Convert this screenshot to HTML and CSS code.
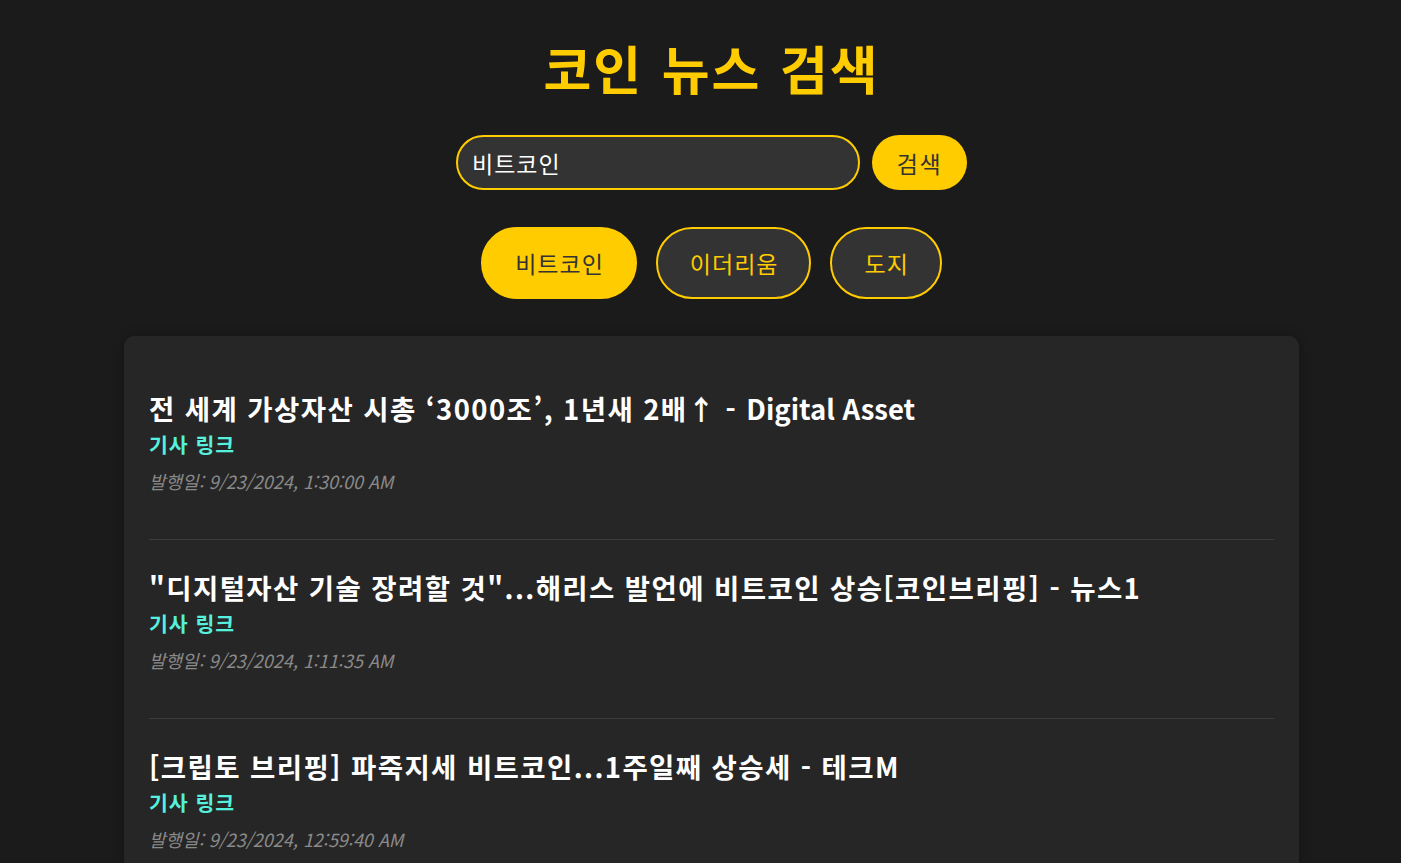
FILE: index.html
```html
<!DOCTYPE html>
<html lang="ko">
<head>
<meta charset="utf-8">
<title>코인 뉴스 검색</title>
<link rel="stylesheet" href="styles.css">
</head>
<body>
<div class="page">
  <h1 class="title">코인 뉴스 검색</h1>
  <form class="search">
    <input class="search-input" type="text" value="비트코인">
    <button class="search-btn" type="button">검색</button>
  </form>
  <div class="filters">
    <button class="chip chip-active" type="button">비트코인</button>
    <button class="chip" type="button">이더리움</button>
    <button class="chip" type="button">도지</button>
  </div>
  <div class="card">
    <div class="item">
      <h2 class="item-title">전 세계 가상자산 시총 ‘3000조’, 1년새 2배↑ - <span class="latin">Digital Asset</span></h2>
      <a class="item-link" href="#">기사 링크</a>
      <p class="item-date">발행일: 9/23/2024, 1:30:00 AM</p>
    </div>
    <div class="item">
      <h2 class="item-title">"디지털자산 기술 장려할 것"...해리스 발언에 비트코인 상승[코인브리핑] - 뉴스1</h2>
      <a class="item-link" href="#">기사 링크</a>
      <p class="item-date">발행일: 9/23/2024, 1:11:35 AM</p>
    </div>
    <div class="item">
      <h2 class="item-title">[크립토 브리핑] 파죽지세 비트코인...1주일째 상승세 - 테크M</h2>
      <a class="item-link" href="#">기사 링크</a>
      <p class="item-date">발행일: 9/23/2024, 12:59:40 AM</p>
    </div>
  </div>
</div>
</body>
</html>
```
FILE: styles.css
```css
html, body {
  margin: 0;
  background: #1b1b1b;
}
body {
  padding: 0 0 0 22px;
  font-family: "Noto Sans CJK KR", "Noto Sans", sans-serif;
  color: #fff;
  overflow: hidden;
  height: 863px;
  box-sizing: border-box;
}
.page {
  width: 1175px;
  margin: 0 auto;
  display: flex;
  flex-direction: column;
  align-items: center;
}
.title {
  margin: 35px 0 0;
  font-size: 52px;
  line-height: 66px;
  font-weight: 700;
  color: #ffcc00;
  letter-spacing: 2px;
  word-spacing: 2px;
}
.search {
  display: flex;
  gap: 12px;
  margin-top: 34px;
}
.search-input {
  width: 404px;
  height: 55px;
  box-sizing: border-box;
  border: 2px solid #ffcc00;
  border-radius: 28px;
  background: #333;
  color: #fff;
  font-family: inherit;
  font-size: 23px;
  letter-spacing: 1px;
  padding: 0 14px;
  outline: none;
}
.search-btn {
  width: 95px;
  height: 55px;
  border: none;
  border-radius: 28px;
  background: #ffcc00;
  color: #333;
  font-family: inherit;
  font-size: 23px;
  letter-spacing: 1.5px;
  padding: 0;
}
.filters {
  display: flex;
  gap: 19px;
  margin-top: 37px;
}
.chip {
  height: 72px;
  box-sizing: border-box;
  padding: 0 31px 0 32px;
  border: 2px solid #ffcc00;
  border-radius: 36px;
  background: #333;
  color: #ffcc00;
  font-family: inherit;
  font-size: 23px;
  letter-spacing: 1px;
}
.chip-active {
  background: #ffcc00;
  color: #333;
}
.card {
  align-self: stretch;
  margin-top: 37px;
  background: #262626;
  border-radius: 10px;
  padding: 25px 25px 0;
  box-shadow: 0 0 12px rgba(0,0,0,0.25);
}
.item {
  padding: 31px 0 46px;
  border-bottom: 1px solid #3d3d3d;
}
.item-title {
  margin: 0;
  font-size: 27.5px;
  line-height: 32px;
  font-weight: 700;
  color: #fff;
  letter-spacing: 1.4px;
}
.latin {
  letter-spacing: 0;
}
.item-link {
  display: block;
  margin-top: 8px;
  font-size: 20.5px;
  line-height: 24px;
  font-weight: 700;
  color: #55f0de;
  letter-spacing: 1px;
  text-decoration: none;
}
.item-date {
  margin: 13px 0 0;
  font-size: 18px;
  line-height: 24px;
  font-style: italic;
  color: #8a8a8a;
}
```
